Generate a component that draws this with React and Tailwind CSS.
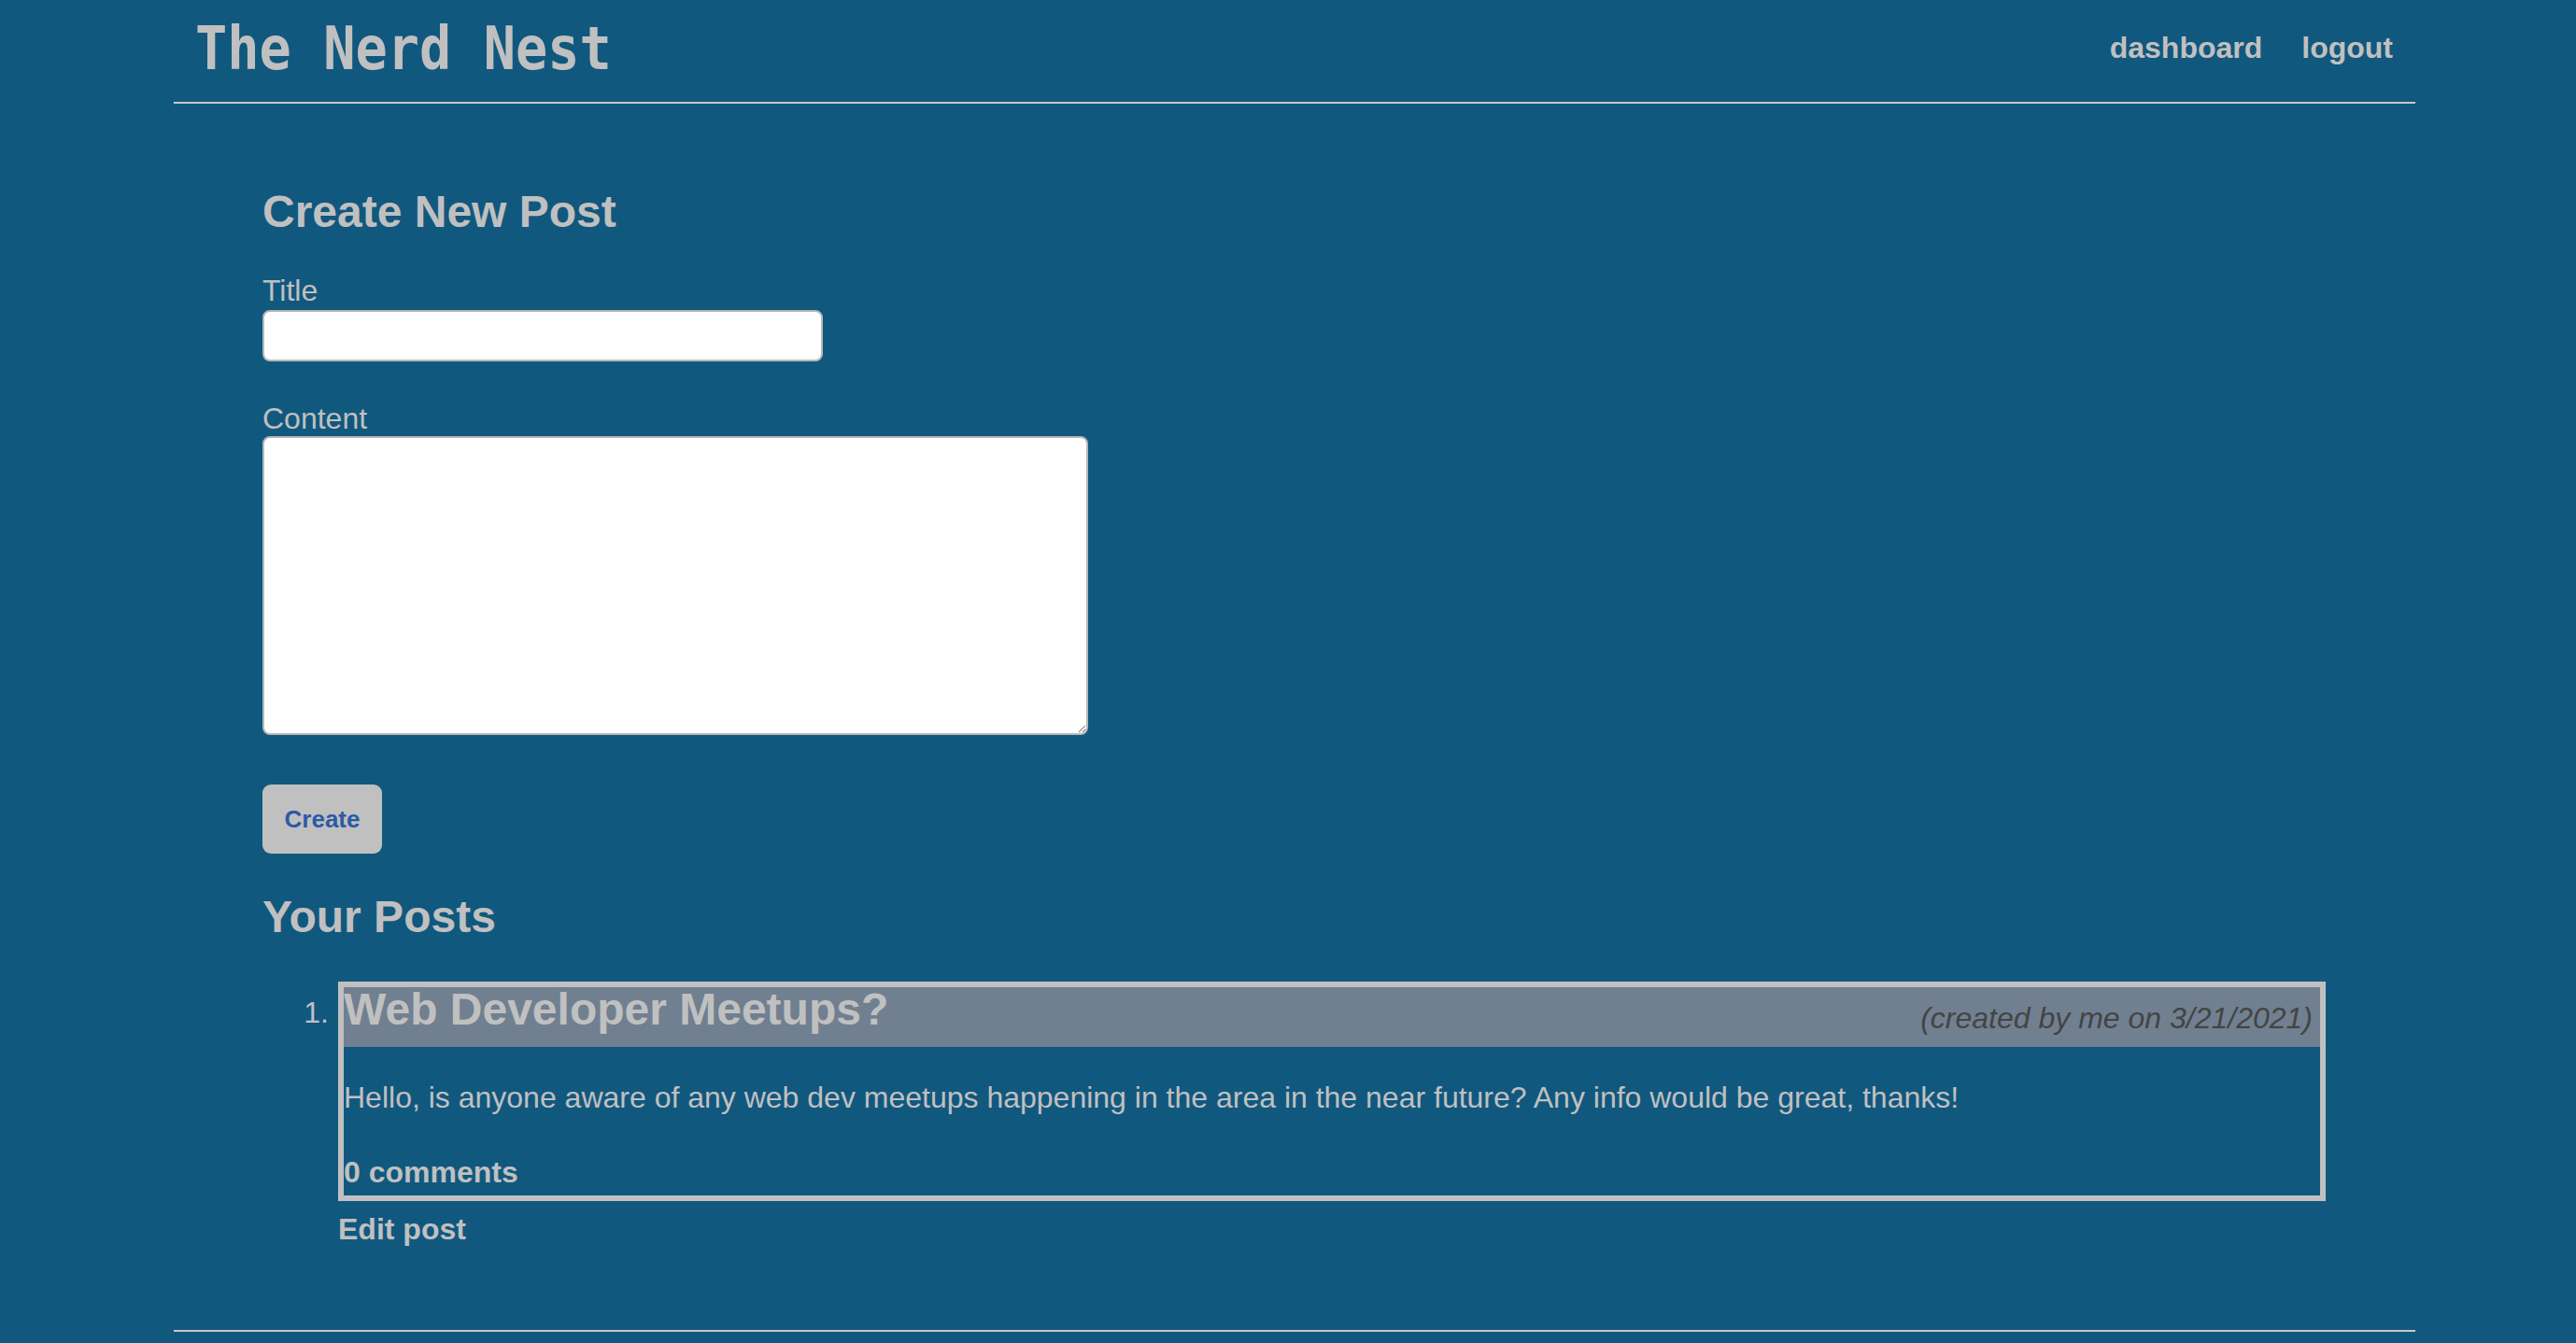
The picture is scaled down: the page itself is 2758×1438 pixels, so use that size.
export default function App() {
  return (
    <div
      className="min-h-screen w-full bg-[#11587f] text-[#c0c0c0]"
      style={{ fontFamily: '"Liberation Sans", Arial, sans-serif' }}
    >
      <div className="ml-[186px] w-[2400px]">
        {/* header */}
        <header className="flex h-[111px] items-start justify-between border-b-2 border-[#c8c8c8]">
          <h1 className="ml-[23px] mt-[20px] origin-left scale-x-[0.89] font-['DejaVu_Sans_Mono',monospace] text-[64px] font-bold leading-none text-[#c0c0c0]">
            The Nerd Nest
          </h1>
          <nav className="mr-[24px] mt-[35px] flex gap-[42px] text-[32px] font-bold leading-none">
            <a>dashboard</a>
            <a>logout</a>
          </nav>
        </header>

        <main className="pl-[95px]">
          <h2 className="mt-[92px] text-[48px] font-bold leading-none">Create New Post</h2>

          <form className="flex flex-col items-start">
            <label className="mt-[44px] text-[32px] leading-none">Title</label>
            <input
              type="text"
              className="mt-[5px] h-[55px] w-[600px] rounded-[8px] border-2 border-[#b8b8b8] bg-white"
            />
            <label className="mt-[45px] text-[32px] leading-none">Content</label>
            <textarea className="mt-[3px] h-[320px] w-[884px] rounded-[8px] border-2 border-[#b8b8b8] bg-white" />
            <button
              type="button"
              className="mt-[53px] h-[74px] w-[128px] rounded-[9px] bg-[#c0c0c0] text-[26px] font-bold text-[#2c5aa6]"
            >
              Create
            </button>
          </form>

          <h2 className="mt-[44px] text-[48px] font-bold leading-none">Your Posts</h2>

          <ol className="mt-[45px]">
            <li className="flex items-start">
              <span className="mt-[17px] w-[81px] pr-[10px] text-right text-[32px] leading-none">1.</span>
              <div className="flex flex-col items-start">
                <div className="w-[2128px] border-[6px] border-[#c0c0c0]">
                  <div className="flex h-[64px] items-start justify-between bg-[#708090]">
                    <h2 className="text-[48px] font-bold leading-none">Web Developer Meetups?</h2>
                    <span className="mt-[17px] pr-[8px] text-[32px] italic leading-none text-[#444444]">
                      (created by me on 3/21/2021)
                    </span>
                  </div>
                  <p className="mt-[38px] text-[32px] leading-none">
                    Hello, is anyone aware of any web dev meetups happening in the area in the near future? Any info
                    would be great, thanks!
                  </p>
                  <p className="mb-[9px] mt-[48px] text-[32px] font-bold leading-none">0 comments</p>
                </div>
                <a className="mt-[14px] text-[32px] font-bold leading-none">Edit post</a>
              </div>
            </li>
          </ol>
        </main>

        <footer className="mt-[92px] border-t-2 border-[#c8c8c8]" />
      </div>
    </div>
  );
}
